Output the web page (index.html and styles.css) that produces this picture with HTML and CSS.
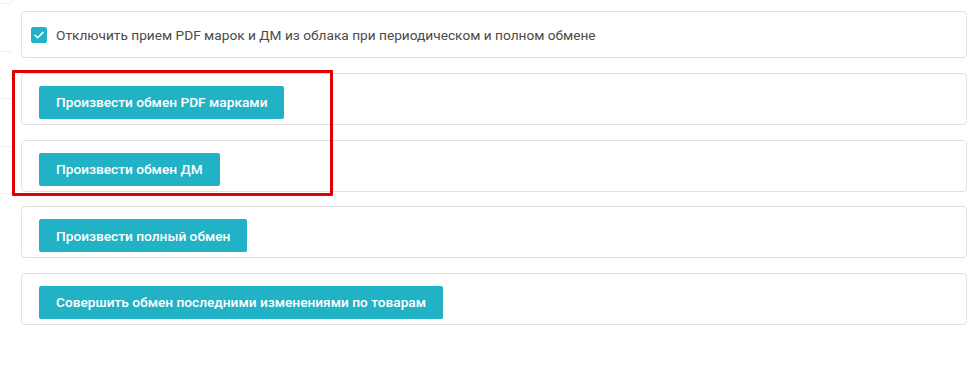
FILE: index.html
```html
<!DOCTYPE html>
<html lang="ru">
<head>
<meta charset="utf-8">
<link rel="stylesheet" href="styles.css">
</head>
<body>
<div class="page">
  <div class="side">
    <div class="side-row first"></div>
    <div class="side-row"></div>
    <div class="side-row"></div>
    <div class="side-row"></div>
    <div class="side-row"></div>
  </div>
  <div class="main">
    <div class="card card-check">
      <label class="check">
        <span class="box">
          <svg width="16" height="16" viewBox="0 0 16 16"><path d="M4 8.2l2.6 2.6L12 5.4" fill="none" stroke="#fff" stroke-width="1.6" stroke-linecap="round" stroke-linejoin="round"/></svg>
        </span>
        <span class="check-text">Отключить прием PDF марок и ДМ из облака при периодическом и полном обмене</span>
      </label>
    </div>
    <div class="card"><button class="btn">Произвести обмен PDF марками</button></div>
    <div class="card"><button class="btn">Произвести обмен ДМ</button></div>
    <div class="card"><button class="btn">Произвести полный обмен</button></div>
    <div class="card"><button class="btn">Совершить обмен последними изменениями по товарам</button></div>
  </div>
  <div class="highlight"></div>
</div>
</body>
</html>
```
FILE: styles.css
```css
* { box-sizing: border-box; }
html, body { margin: 0; background: #fff; }
body { font-family: Roboto, "Noto Sans", "Liberation Sans", sans-serif; }
.page { position: relative; display: flex; width: 980px; height: 391px; }
.side { width: 12px; display: flex; flex-direction: column; }
.side-row { height: 47.5px; border-bottom: 1px solid #f0f0f0; }
.side-row.first { height: 4px; border-right: 1px solid #f0f0f0; border-bottom-right-radius: 3px; }
.main { margin-left: 9px; padding-top: 11px; width: 946px; display: flex; flex-direction: column; gap: 14.67px; }
.card { border: 1px solid #e2e2e2; border-radius: 4px; height: 52px; padding: 12px 16px 0 17px; background: #fff; }
.card-check { height: 47px; margin-bottom: 0.33px; padding: 1px 0 0 9px; display: flex; align-items: center; }
.check { display: flex; align-items: center; gap: 9px; }
.box { width: 16px; height: 16px; border-radius: 2px; background: #22b2c6; display: block; }
.box svg { display: block; }
.check-text { font-size: 13.7px; color: #4a4a4a; }
.btn { border: 0; border-radius: 2px; height: 33px; padding: 0 17px; background: #22b2c6; color: #fff; font-family: inherit; font-size: 13.7px; font-weight: 500; cursor: pointer; }
.highlight { position: absolute; left: 12px; top: 70px; width: 321px; height: 126px; border: 3px solid #e00000; border-radius: 1px; pointer-events: none; }
```
